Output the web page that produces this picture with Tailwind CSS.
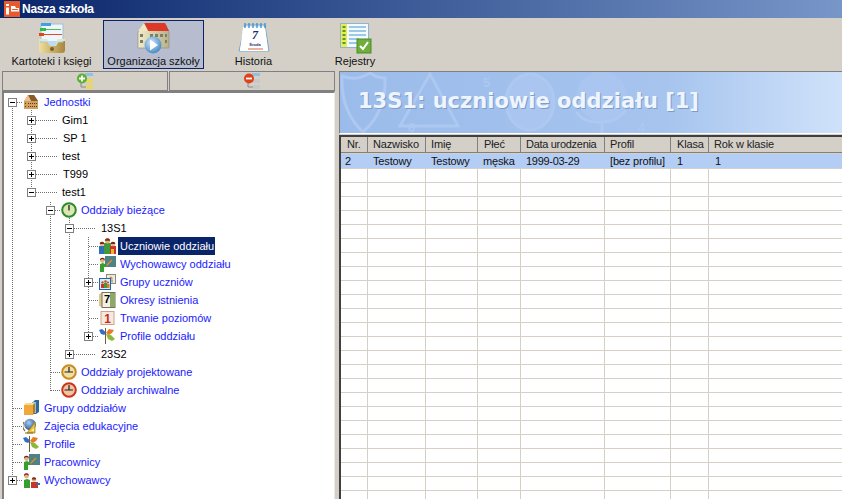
<!DOCTYPE html>
<html lang="pl">
<head>
<meta charset="UTF-8">
<title>Nasza szkoła</title>
<script src="https://cdn.jsdelivr.net/npm/@tailwindcss/browser@4"></script>
</head>
<body class="w-[842px] h-[499px] overflow-hidden bg-[#d4d0c8] font-['Liberation_Sans',sans-serif] text-[11px] text-black">

<svg width="0" height="0" class="absolute">
  <defs>
    <linearGradient id="wood" x1="0" y1="0" x2="1" y2="0"><stop offset="0" stop-color="#f0dfa0"/><stop offset="1" stop-color="#a8853a"/></linearGradient>
    <linearGradient id="wall" x1="0" y1="0" x2="1" y2="0"><stop offset="0" stop-color="#f3eccb"/><stop offset="1" stop-color="#b9b08c"/></linearGradient>
    <radialGradient id="ball" cx=".4" cy=".35" r=".7"><stop offset="0" stop-color="#cfe6f8"/><stop offset="1" stop-color="#3f86c4"/></radialGradient>
    <radialGradient id="earth" cx=".4" cy=".35" r=".7"><stop offset="0" stop-color="#a8cdf0"/><stop offset="1" stop-color="#1f4f96"/></radialGradient>
    <symbol id="clock-green" viewBox="0 0 16 16">
      <circle cx="8" cy="8" r="6.800" fill="#dbe8b4" stroke="#2f8a2a" stroke-width="2"/>
      <path d="M8 3v5.500" stroke="#222" stroke-width="1.300"/>
    </symbol>
    <symbol id="clock-orange" viewBox="0 0 16 16">
      <circle cx="8" cy="8" r="6.800" fill="#f2dfa6" stroke="#c98a1e" stroke-width="2"/>
      <path d="M8 3v5H3.500M8 8h4" fill="none" stroke="#222" stroke-width="1.200"/>
    </symbol>
    <symbol id="clock-red" viewBox="0 0 16 16">
      <circle cx="8" cy="8" r="6.800" fill="#f2c4a0" stroke="#c8341e" stroke-width="2"/>
      <path d="M8 3v5H3.500M8 8h4" fill="none" stroke="#222" stroke-width="1.200"/>
    </symbol>
    <symbol id="building" viewBox="0 0 16 16">
      <path d="M1 7l4-6h6l4 6v8H1z" fill="#d0a060"/>
      <path d="M5 1h6l4 6H8z" fill="#8a5a2c"/>
      <path d="M1 7l4-6 3 6z" fill="#ecc08a"/>
      <path d="M2 9h1v1H2zM5 9h1v1H5zM7 9h1v1H7zM9 9h1v1H9zM11 9h1v1h-1zM13 9h1v1h-1zM2 12h1v1H2zM5 12h1v1H5zM7 12h1v1H7zM9 12h1v1H9zM11 12h1v1h-1zM13 12h1v1h-1z" fill="#5e3a18"/>
    </symbol>
    <symbol id="kids" viewBox="0 0 17 16">
      <rect x="0" y="8" width="6" height="8" fill="#2f6fb8"/>
      <circle cx="3" cy="6" r="2.300" fill="#e4b088"/><path d="M.7 6a2.300 2.300 0 014.600 0z" fill="#7a2a10"/>
      <rect x="5" y="5" width="7" height="11" fill="#3f9a3a"/>
      <circle cx="8.500" cy="2.800" r="2.600" fill="#e4b088"/><path d="M5.900 2.800a2.600 2.600 0 015.200 0z" fill="#8a2a10"/>
      <rect x="11" y="8" width="6" height="8" fill="#c8352a"/>
      <rect x="12" y="11" width="3" height="5" fill="#e8b43a"/>
      <circle cx="14" cy="6" r="2.300" fill="#e4b088"/><path d="M11.700 6a2.300 2.300 0 014.600 0z" fill="#7a2a10"/>
    </symbol>
    <symbol id="teacher" viewBox="0 0 17 16">
      <rect x="6" y="0" width="11" height="11" fill="#4f8284"/>
      <path d="M7 10l6-6" stroke="#e88a30" stroke-width="1.300"/>
      <path d="M1 16V8l3-1 4 2-1 2H5v5z" fill="#35a030"/>
      <circle cx="3.500" cy="4.500" r="2.400" fill="#e4b088"/><path d="M1 4.500a2.500 2.500 0 015-.5L3 3z" fill="#7a2a10"/>
    </symbol>
    <symbol id="teacher-kid" viewBox="0 0 17 16">
      <path d="M1 16V8l3-1 3 1v8z" fill="#35a030"/>
      <circle cx="3.500" cy="4" r="2.400" fill="#e4b088"/><path d="M1 4a2.500 2.500 0 015-.5L3 2.500z" fill="#7a2a10"/>
      <rect x="8" y="10" width="7" height="6" fill="#c8352a"/>
      <circle cx="11" cy="7.500" r="2.200" fill="#e4b088"/><path d="M8.800 7.500a2.200 2.200 0 014.400 0z" fill="#7a2a10"/>
      <path d="M13 12h4" stroke="#2f6fb8" stroke-width="2"/>
    </symbol>
    <symbol id="groups" viewBox="0 0 17 16">
      <rect x="7.500" y=".5" width="9" height="9" fill="#eceadf" stroke="#8a8a80"/>
      <circle cx="12" cy="4" r="1.600" fill="#c99a58"/><rect x="10" y="5.500" width="4" height="3" fill="#b9b08c"/>
      <rect x=".5" y="4.500" width="11" height="11" fill="#dfe8f3" stroke="#1f63b0"/>
      <rect x="2" y="10" width="3" height="4" fill="#c8352a"/><rect x="5" y="9" width="3" height="5" fill="#3f9a3a"/><rect x="8" y="10" width="2.500" height="4" fill="#e07a20"/>
      <circle cx="3.500" cy="8.500" r="1.200" fill="#b5562a"/><circle cx="6.500" cy="7.500" r="1.300" fill="#b5562a"/><circle cx="9" cy="8.500" r="1.100" fill="#b5562a"/>
    </symbol>
    <symbol id="periods" viewBox="0 0 17 16">
      <path d="M0 2l3-1v14l-3-1z" fill="#d9c88e"/>
      <rect x="3" y=".5" width="13" height="15" fill="#f4f1e2" stroke="#77705a"/>
      <rect x="11" y="1" width="5" height="14" fill="#8ea868"/>
      <text x="5" y="11" font-size="11" font-weight="700" font-family="Liberation Sans">7</text>
    </symbol>
    <symbol id="one" viewBox="0 0 16 16">
      <rect x="1.500" y="1.500" width="13" height="13" fill="#f5e9de" stroke="#c9a48e"/>
      <text x="8" y="12.500" text-anchor="middle" font-size="12" font-weight="700" fill="#cc2a14" font-family="Liberation Sans">1</text>
    </symbol>
    <symbol id="flags" viewBox="0 0 17 16">
      <path d="M6.500 0v16" stroke="#7a5a30"/>
      <path d="M0 2l3-1 3.500 3-1 3L2 6z" fill="#2f6fc8"/>
      <path d="M7 5l3-4 5 1-2 3-3 2z" fill="#e8792a"/>
      <path d="M7 6l5 1 4 4-3 2-4-2z" fill="#8fb83a"/>
    </symbol>
    <symbol id="cubes" viewBox="0 0 17 16">
      <path d="M9 3l3-3h4v12l-3 2H9z" fill="#2f6a98"/>
      <path d="M10 2h3v11h-3z" fill="#8fc3e2"/>
      <rect x="1" y="5" width="9" height="10" fill="#f0a83a"/>
      <path d="M1 5l2-2h9l-2 2z" fill="#f7d98a"/>
      <path d="M10 5l2-2v9l-2 3z" fill="#b87a1a"/>
    </symbol>
    <symbol id="globe" viewBox="0 0 17 16">
      <path d="M2 13a7 7 0 01-1-9" fill="none" stroke="#8a6a2a" stroke-width="1.200"/>
      <circle cx="7" cy="6.500" r="5.800" fill="url(#earth)"/>
      <path d="M12 4v11H4z" fill="#ecc030" stroke="#9a7a14" stroke-width=".7"/>
      <path d="M11 10v3H8z" fill="#fff6c8"/>
      <path d="M2 15h8" stroke="#8a6a2a"/>
    </symbol>
  </defs>
</svg>

<!-- title bar -->
<div class="h-[18px] flex items-center bg-gradient-to-r from-[#0a246a] to-[#7896c8] pl-[4px]">
  <svg width="16" height="16" viewBox="0 0 16 16">
    <rect width="16" height="16" fill="#e8592c"/>
    <rect x="2" y="3" width="3" height="2" fill="#fff"/><rect x="2" y="6.500" width="3" height="7" fill="#fff"/>
    <path d="M7 5h4l1 2h3v3.500H7z" fill="#fff"/><path d="M8 8.500h6" stroke="#e8592c"/>
  </svg>
  <span class="ml-[2px] font-bold text-white text-[12px] tracking-[-.25px]">Nasza szkoła</span>
</div>

<!-- toolbar -->
<div class="h-[52px] flex pt-[2px] text-[#111]">
  <div class="w-[103px] flex flex-col items-center whitespace-nowrap">
    <svg width="34" height="33" viewBox="0 0 34 33" class="mt-[1px]">
      <path d="M4 18h26v11a3 3 0 01-3 3H7a3 3 0 01-3-3z" fill="url(#wood)"/>
      <rect x="6" y="3" width="22" height="18" fill="#eef6fc" stroke="#9fc0d6"/>
      <rect x="6" y="2" width="10" height="3" fill="#3da0e8"/>
      <rect x="7" y="8" width="19" height="1" fill="#58b858"/><rect x="5" y="7" width="6" height="3" fill="#28c048"/>
      <rect x="7" y="13" width="20" height="1" fill="#e04a28"/><rect x="4" y="12" width="5" height="3" fill="#e0481c"/>
      <path d="M4 18h8l3 5h5l3-5h7v2h-6l-3 5h-6l-3-5H4z" fill="#dfe8c8"/>
      <path d="M12 20h11l-3 5h-5z" fill="#bcdcf0"/>
      <circle cx="17" cy="28" r="2" fill="#7a6028"/>
    </svg>
    <span class="leading-[14px]">Kartoteki i księgi</span>
  </div>
  <div class="w-[101px] h-[49px] border border-[#0a246a] bg-[#b7bccf] flex flex-col items-center whitespace-nowrap">
    <svg width="34" height="33" viewBox="0 0 34 33">
      <path d="M1 11l6-7h22l3 7v16H1z" fill="url(#wall)" stroke="#8f8a6e" stroke-width=".6"/>
      <path d="M7 2h21l4 8H11z" fill="#dc3a26"/>
      <path d="M7 2L1 10h10z" fill="#efe7c4"/>
      <path d="M3 13h3v3H3zM3 19h3v3H3zM13 13h3v3h-3zM18 13h3v3h-3zM23 13h3v3h-3zM28 13h2v3h-2zM13 19h2v3h-2zM28 19h2v3h-2z" fill="#76806a"/>
      <circle cx="16" cy="24" r="8.500" fill="url(#ball)"/>
      <path d="M13 18.500l8 5.500-8 5.500z" fill="#fff"/>
    </svg>
    <span class="leading-[14px]">Organizacja szkoły</span>
  </div>
  <div class="w-[99px] flex flex-col items-center whitespace-nowrap">
    <svg width="34" height="33" viewBox="0 0 34 33" class="mt-[1px]">
      <path d="M8 4h20l4 26H2z" fill="#e4eef7" stroke="#7ba5c7"/>
      <path d="M6 6h22l3 24H3z" fill="#fff"/>
      <path d="M8 2v5M12 2v5M16 2v5M20 2v5M24 2v5M28 2v5" stroke="#3590c8" stroke-width="1.300"/>
      <text x="18" y="18" text-anchor="middle" font-family="Liberation Serif" font-size="12" font-weight="700" font-style="italic" fill="#0f2e70">7</text>
      <text x="18" y="25" text-anchor="middle" font-family="Liberation Sans" font-size="4" font-weight="700" fill="#0f2e70">Środa</text>
      <path d="M11 28h15" stroke="#d8683c"/>
    </svg>
    <span class="leading-[14px]">Historia</span>
  </div>
  <div class="w-[104px] flex flex-col items-center whitespace-nowrap">
    <svg width="34" height="33" viewBox="0 0 34 33" class="mt-[1px] ml-[2px]">
      <rect x="1.500" y="2.500" width="28" height="24" fill="#f4f9fd" stroke="#8fb4d0"/>
      <rect x="2" y="3" width="6" height="23" fill="#e8ee50"/>
      <path d="M3.500 5h3v2h-3zM3.500 9h3v2h-3zM3.500 13h3v2h-3zM3.500 17h3v2h-3zM3.500 21h3v2h-3z" fill="#5a9a2a"/>
      <path d="M10 6h17M10 10h17M10 14h17M10 18h10M10 22h10" stroke="#3f9ad0"/>
      <rect x="18" y="18" width="14" height="14" fill="#6fae3a" stroke="#4d8a28"/>
      <path d="M21 25l3 3 5-7" fill="none" stroke="#fff" stroke-width="2"/>
    </svg>
    <span class="leading-[14px]">Rejestry</span>
  </div>
</div>

<!-- main -->
<div class="flex h-[429px] pl-[2px] pt-[1px]">
  <div class="w-[333px] flex flex-col shrink-0">
    <div class="h-[20px] flex gap-[1px] shrink-0">
      <div class="w-[166px] border border-[#808080] flex justify-center items-center">
        <svg width="16" height="16" viewBox="0 0 16 16">
          <path d="M8 0h8v3H8z" fill="#8ec3e0"/>
          <path d="M9 6h7v4H9zM9 12h7v4H9z" fill="#e8d860"/>
          <path d="M4 10v4h5" fill="none" stroke="#888"/>
          <circle cx="5" cy="5.500" r="5" fill="#5ab030"/>
          <path d="M5 2.500v6M2 5.500h6" stroke="#fff" stroke-width="1.800"/>
        </svg>
      </div>
      <div class="w-[166px] border border-[#808080] flex justify-center items-center">
        <svg width="16" height="16" viewBox="0 0 16 16">
          <path d="M8 0h8v3H8z" fill="#8ec3e0"/>
          <path d="M9 6h7v4H9zM9 12h7v4H9z" fill="#c8c8c8"/>
          <path d="M4 10v4h5" fill="none" stroke="#888"/>
          <circle cx="5" cy="5.500" r="5" fill="#e0401c"/>
          <path d="M2 5.500h6" stroke="#fff" stroke-width="1.800"/>
        </svg>
      </div>
    </div>
    <!-- tree -->
    <div class="relative flex-1 bg-white border-t-2 border-l-2 border-[#808080] border-r border-r-[#ecebe6] text-[#1a1aff]">
      <!-- connectors: coordinates are relative to this panel (x-4, y-93) -->
      <svg class="absolute left-0 top-0" width="333" height="408" fill="none" stroke="#707070" stroke-dasharray="1 1">
        <path d="M8.500 13V388M27.500 17V100M46.500 109V298M65.500 125V262M84.500 144V244"/>
        <path d="M9 9.500H18M28 27.500H54M28 45.500H54M28 63.500H54M28 81.500H54M28 99.500H54M47 117.500H56M66 135.500H92M85 153.500H94M85 171.500H94M85 189.500H94M85 207.500H94M85 225.500H94M85 243.500H94M66 261.500H92M47 279.500H56M47 297.500H56M9 315.500H18M9 333.500H18M9 351.500H18M9 369.500H18M9 387.500H18"/>
      </svg>
      <div class="relative flex flex-col">
        <div class="h-[18px] flex items-center pl-[4px]">
          <span class="w-[9px] h-[9px] border border-[#808080] bg-white flex items-center justify-center shrink-0"><span class="w-[5px] h-[1px] bg-black"></span></span>
          <svg width="16" height="16" class="ml-[6px] shrink-0"><use href="#building"/></svg>
          <span class="ml-[5px]">Jednostki</span>
        </div>
        <div class="h-[18px] flex items-center pl-[23px] text-black">
          <span class="w-[9px] h-[9px] border border-[#808080] bg-white relative shrink-0"><span class="absolute left-[1px] top-[3px] w-[5px] h-[1px] bg-black"></span><span class="absolute left-[3px] top-[1px] w-[1px] h-[5px] bg-black"></span></span>
          <span class="ml-[26px]">Gim1</span>
        </div>
        <div class="h-[18px] flex items-center pl-[23px] text-black">
          <span class="w-[9px] h-[9px] border border-[#808080] bg-white relative shrink-0"><span class="absolute left-[1px] top-[3px] w-[5px] h-[1px] bg-black"></span><span class="absolute left-[3px] top-[1px] w-[1px] h-[5px] bg-black"></span></span>
          <span class="ml-[27px]">SP 1</span>
        </div>
        <div class="h-[18px] flex items-center pl-[23px] text-black">
          <span class="w-[9px] h-[9px] border border-[#808080] bg-white relative shrink-0"><span class="absolute left-[1px] top-[3px] w-[5px] h-[1px] bg-black"></span><span class="absolute left-[3px] top-[1px] w-[1px] h-[5px] bg-black"></span></span>
          <span class="ml-[26px]">test</span>
        </div>
        <div class="h-[18px] flex items-center pl-[23px] text-black">
          <span class="w-[9px] h-[9px] border border-[#808080] bg-white relative shrink-0"><span class="absolute left-[1px] top-[3px] w-[5px] h-[1px] bg-black"></span><span class="absolute left-[3px] top-[1px] w-[1px] h-[5px] bg-black"></span></span>
          <span class="ml-[27px]">T999</span>
        </div>
        <div class="h-[18px] flex items-center pl-[23px] text-black">
          <span class="w-[9px] h-[9px] border border-[#808080] bg-white flex items-center justify-center shrink-0"><span class="w-[5px] h-[1px] bg-black"></span></span>
          <span class="ml-[26px]">test1</span>
        </div>
        <div class="h-[18px] flex items-center pl-[42px]">
          <span class="w-[9px] h-[9px] border border-[#808080] bg-white flex items-center justify-center shrink-0"><span class="w-[5px] h-[1px] bg-black"></span></span>
          <svg width="16" height="16" class="ml-[6px] shrink-0"><use href="#clock-green"/></svg>
          <span class="ml-[4px]">Oddziały bieżące</span>
        </div>
        <div class="h-[18px] flex items-center pl-[61px] text-black">
          <span class="w-[9px] h-[9px] border border-[#808080] bg-white flex items-center justify-center shrink-0"><span class="w-[5px] h-[1px] bg-black"></span></span>
          <span class="ml-[27px]">13S1</span>
        </div>
        <div class="h-[18px] flex items-center pl-[95px]">
          <svg width="17" height="16" class="shrink-0"><use href="#kids"/></svg>
          <span class="ml-[2px] h-[18px] leading-[18px] w-[97px] pl-[2px] bg-[#0a246a] text-white">Uczniowie oddziału</span>
        </div>
        <div class="h-[18px] flex items-center pl-[95px]">
          <svg width="17" height="16" class="shrink-0"><use href="#teacher"/></svg>
          <span class="ml-[4px]">Wychowawcy oddziału</span>
        </div>
        <div class="h-[18px] flex items-center pl-[80px]">
          <span class="w-[9px] h-[9px] border border-[#808080] bg-white relative shrink-0"><span class="absolute left-[1px] top-[3px] w-[5px] h-[1px] bg-black"></span><span class="absolute left-[3px] top-[1px] w-[1px] h-[5px] bg-black"></span></span>
          <svg width="17" height="16" class="ml-[6px] shrink-0"><use href="#groups"/></svg>
          <span class="ml-[4px]">Grupy uczniów</span>
        </div>
        <div class="h-[18px] flex items-center pl-[95px]">
          <svg width="17" height="16" class="shrink-0"><use href="#periods"/></svg>
          <span class="ml-[4px]">Okresy istnienia</span>
        </div>
        <div class="h-[18px] flex items-center pl-[95px]">
          <svg width="17" height="16" class="shrink-0"><use href="#one"/></svg>
          <span class="ml-[4px]">Trwanie poziomów</span>
        </div>
        <div class="h-[18px] flex items-center pl-[80px]">
          <span class="w-[9px] h-[9px] border border-[#808080] bg-white relative shrink-0"><span class="absolute left-[1px] top-[3px] w-[5px] h-[1px] bg-black"></span><span class="absolute left-[3px] top-[1px] w-[1px] h-[5px] bg-black"></span></span>
          <svg width="17" height="16" class="ml-[6px] shrink-0"><use href="#flags"/></svg>
          <span class="ml-[4px]">Profile oddziału</span>
        </div>
        <div class="h-[18px] flex items-center pl-[61px] text-black">
          <span class="w-[9px] h-[9px] border border-[#808080] bg-white relative shrink-0"><span class="absolute left-[1px] top-[3px] w-[5px] h-[1px] bg-black"></span><span class="absolute left-[3px] top-[1px] w-[1px] h-[5px] bg-black"></span></span>
          <span class="ml-[27px]">23S2</span>
        </div>
        <div class="h-[18px] flex items-center pl-[57px]">
          <svg width="16" height="16" class="shrink-0"><use href="#clock-orange"/></svg>
          <span class="ml-[4px]">Oddziały projektowane</span>
        </div>
        <div class="h-[18px] flex items-center pl-[57px]">
          <svg width="16" height="16" class="shrink-0"><use href="#clock-red"/></svg>
          <span class="ml-[4px]">Oddziały archiwalne</span>
        </div>
        <div class="h-[18px] flex items-center pl-[19px]">
          <svg width="17" height="16" class="shrink-0"><use href="#cubes"/></svg>
          <span class="ml-[4px]">Grupy oddziałów</span>
        </div>
        <div class="h-[18px] flex items-center pl-[19px]">
          <svg width="17" height="16" class="shrink-0"><use href="#globe"/></svg>
          <span class="ml-[4px]">Zajęcia edukacyjne</span>
        </div>
        <div class="h-[18px] flex items-center pl-[19px]">
          <svg width="17" height="16" class="shrink-0"><use href="#flags"/></svg>
          <span class="ml-[4px]">Profile</span>
        </div>
        <div class="h-[18px] flex items-center pl-[19px]">
          <svg width="17" height="16" class="shrink-0"><use href="#teacher"/></svg>
          <span class="ml-[4px]">Pracownicy</span>
        </div>
        <div class="h-[18px] flex items-center pl-[4px]">
          <span class="w-[9px] h-[9px] border border-[#808080] bg-white relative shrink-0"><span class="absolute left-[1px] top-[3px] w-[5px] h-[1px] bg-black"></span><span class="absolute left-[3px] top-[1px] w-[1px] h-[5px] bg-black"></span></span>
          <svg width="17" height="16" class="ml-[6px] shrink-0"><use href="#teacher-kid"/></svg>
          <span class="ml-[4px]">Wychowawcy</span>
        </div>
      </div>
    </div>
  </div>

  <!-- right side -->
  <div class="ml-[4px] flex-1 flex flex-col min-w-0">
    <div class="relative h-[63px] shrink-0 border-t border-l border-[#808080] border-b border-b-white bg-gradient-to-r from-[#9bbbea] via-[#a6c4ee] via-65% to-[#d0e2fa] flex items-center overflow-hidden">
      <svg class="absolute left-0 top-0" width="400" height="62" fill="none" stroke="#adc8f1" stroke-width="3">
        <path d="M2 4c10 4 20 2 28-3 6 4 10 5 15 5 1 24-8 42-22 54C10 48 1 30 2 4z"/>
        <path d="M90 2l28 52H60z"/>
        <ellipse cx="190" cy="30" rx="24" ry="28" fill="#aac6f0"/>
        <circle cx="262" cy="24" r="25" fill="#aac6f0" stroke="none"/>
        <path d="M236 40c10 14 38 14 50-2M262 52v10"/>
        <text x="143" y="15" font-size="13" font-weight="700" fill="#adc8f1" stroke="none" font-family="Liberation Sans">5</text>
        <text x="68" y="60" font-size="13" font-weight="700" fill="#adc8f1" stroke="none" font-family="Liberation Sans">6</text>
        <text x="298" y="60" font-size="13" font-weight="700" fill="#adc8f1" stroke="none" font-family="Liberation Sans">4</text>
      </svg>
      <span class="relative ml-[18px] -mt-[1px] font-['DejaVu_Sans',sans-serif] font-bold text-[21px] text-[#eef5fe] [text-shadow:1px_1px_0_#7d9cc8] whitespace-nowrap">13S1: uczniowie oddziału [1]</span>
    </div>
    <div class="flex-1 flex flex-col border-l-2 border-t-2 border-[#404040] bg-white mt-[1px] overflow-hidden tracking-[-.15px]">
      <div class="h-[16px] flex bg-[#d4d0c8] shrink-0 leading-[15px] text-[#222]">
        <div class="w-[27px] pl-[6px] border-r border-b border-[#808080]">Nr.</div>
        <div class="w-[58px] pl-[5px] border-r border-b border-[#808080]">Nazwisko</div>
        <div class="w-[52px] pl-[5px] border-r border-b border-[#808080]">Imię</div>
        <div class="w-[43px] pl-[6px] border-r border-b border-[#808080]">Płeć</div>
        <div class="w-[84px] pl-[5px] border-r border-b border-[#808080] tracking-[-.3px]">Data urodzenia</div>
        <div class="w-[66px] pl-[5px] border-r border-b border-[#808080]">Profil</div>
        <div class="w-[38px] pl-[6px] border-r border-b border-[#808080]">Klasa</div>
        <div class="flex-1 pl-[5px] border-b border-[#808080]">Rok w klasie</div>
      </div>
      <div class="h-[16px] flex bg-[#b4cdf4] leading-[14px] text-[#111] shrink-0 border-y border-[#d4d0c8]">
        <div class="w-[27px] pl-[4px]">2</div>
        <div class="w-[58px] pl-[5px]">Testowy</div>
        <div class="w-[52px] pl-[5px]">Testowy</div>
        <div class="w-[43px] pl-[5px]">męska</div>
        <div class="w-[84px] pl-[5px] tracking-[-.3px]">1999-03-29</div>
        <div class="w-[66px] pl-[5px] whitespace-nowrap">[bez profilu]</div>
        <div class="w-[38px] pl-[6px]">1</div>
        <div class="flex-1 pl-[6px]">1</div>
      </div>
      <div class="flex-1 bg-white flex relative">
        <div class="absolute inset-0 bg-[linear-gradient(to_bottom,transparent_13px,#d4d0c8_13px)] bg-[length:100%_14px]"></div>
        <div class="w-[27px] border-r border-[#d4d0c8]"></div>
        <div class="w-[58px] border-r border-[#d4d0c8]"></div>
        <div class="w-[52px] border-r border-[#d4d0c8]"></div>
        <div class="w-[43px] border-r border-[#d4d0c8]"></div>
        <div class="w-[84px] border-r border-[#d4d0c8]"></div>
        <div class="w-[66px] border-r border-[#d4d0c8]"></div>
        <div class="w-[38px] border-r border-[#d4d0c8]"></div>
      </div>
    </div>
  </div>
</div>
</body>
</html>
